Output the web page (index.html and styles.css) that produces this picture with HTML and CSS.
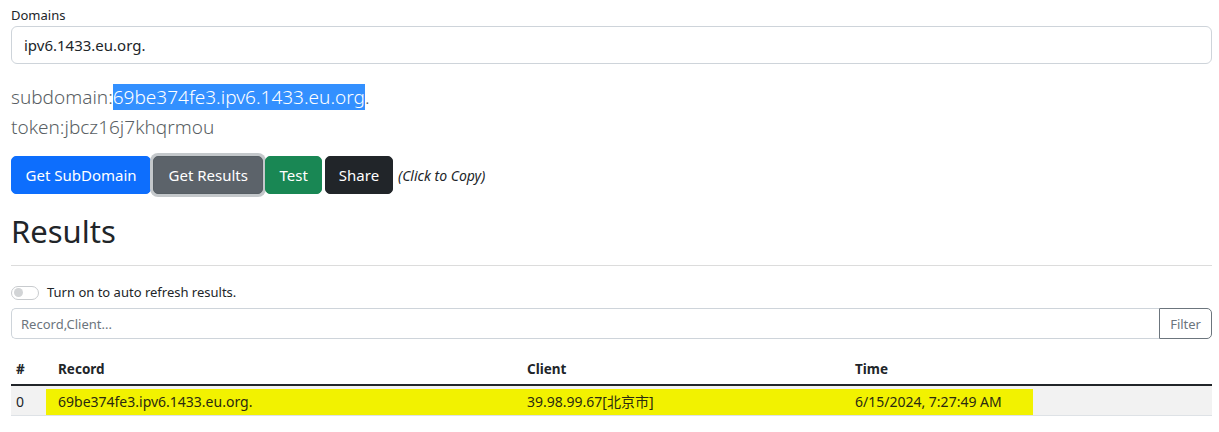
FILE: index.html
```html
<!DOCTYPE html>
<html lang="en">
<head>
<meta charset="utf-8">
<title>DNS Log</title>
<link rel="stylesheet" href="styles.css">
</head>
<body>
<div class="page">
  <label class="form-label" for="domain">Domains</label>
  <input class="form-control" id="domain" type="text" value="ipv6.1433.eu.org.">

  <div class="lead">
    <div>subdomain:<span class="sel">69be374fe3.ipv6.1433.eu.org</span>.</div>
    <div>token:jbcz16j7khqrmou</div>
  </div>

  <div class="btn-row">
    <button class="btn btn-primary">Get SubDomain</button>
    <button class="btn btn-secondary focus">Get Results</button>
    <button class="btn btn-success">Test</button>
    <button class="btn btn-dark">Share</button>
    <em class="hint">(Click to Copy)</em>
  </div>

  <h2 class="title">Results</h2>
  <hr class="rule">

  <div class="switch-row">
    <span class="switch"><span class="knob"></span></span>
    <span class="switch-label">Turn on to auto refresh results.</span>
  </div>

  <div class="input-group">
    <input class="filter-input" type="text" placeholder="Record,Client...">
    <button class="btn-filter">Filter</button>
  </div>

  <table class="table">
    <thead>
      <tr>
        <th class="c-idx">#</th>
        <th class="c-rec">Record</th>
        <th class="c-cli">Client</th>
        <th class="c-time">Time</th>
        <th class="c-rest"></th>
      </tr>
    </thead>
    <tbody>
      <tr class="striped">
        <td class="c-idx"><div class="cell">0</div></td>
        <td class="c-rec"><div class="cell hl">69be374fe3.ipv6.1433.eu.org.</div></td>
        <td class="c-cli"><div class="cell hl">39.98.99.67[北京市]</div></td>
        <td class="c-time"><div class="cell hl">6/15/2024, 7:27:49 AM</div></td>
        <td class="c-rest"><div class="cell"></div></td>
      </tr>
    </tbody>
  </table>
</div>
</body>
</html>
```

FILE: styles.css
```css
* { box-sizing: border-box; }

html, body {
  margin: 0;
  padding: 0;
  background: #fff;
}

body {
  font-family: "Noto Sans", "Noto Sans CJK SC", sans-serif;
  color: #212529;
  font-size: 16px;
  line-height: 1.5;
}

.page {
  padding: 5px 7px 0 11px;
}

.form-label {
  display: block;
  font-size: 13px;
  line-height: 21px;
  margin-bottom: 0;
}

.form-control {
  display: block;
  width: 100%;
  height: 38px;
  padding: 6px 12px;
  font-family: inherit;
  font-size: 15px;
  color: #212529;
  border: 1px solid #ced4da;
  border-radius: 6px;
  background: #fff;
  outline: none;
}

.lead {
  margin-top: 18px;
  font-size: 19px;
  font-weight: 300;
  line-height: 30px;
  color: #5a5f64;
}

.sel {
  background: #3390ff;
  color: #fff;
}

.btn-row {
  display: flex;
  align-items: center;
  gap: 2px;
  margin-top: 14px;
}

.btn {
  height: 38px;
  padding: 0 13px;
  font-family: inherit;
  font-size: 15px;
  line-height: 36px;
  color: #fff;
  border: 1px solid transparent;
  border-radius: 5px;
  cursor: pointer;
}

.btn-primary { background: #0d6efd; border-color: #0d6efd; padding: 0 13.5px; }
.btn-secondary { background: #5c636a; border-color: #565e64; }
.btn-success { background: #198754; border-color: #198754; padding: 0 13px; }
.btn-dark { background: #212529; border-color: #212529; margin-left: 1px; padding: 0 13px; }

.btn.focus {
  box-shadow: 0 0 0 3px #c4c8cb;
  padding: 0 14.5px;
}

.hint {
  margin-left: 3px;
  font-size: 14px;
  color: #212529;
}

.title {
  margin: 18px 0 0;
  font-size: 31px;
  font-weight: 400;
  line-height: 38px;
}

.rule {
  margin: 15px 0 0;
  border: 0;
  border-top: 1px solid #dcdcdc;
  height: 0;
}

.switch-row {
  display: flex;
  align-items: center;
  gap: 8px;
  margin-top: 16px;
  height: 21px;
}

.switch {
  display: flex;
  align-items: center;
  width: 28px;
  height: 14px;
  border: 1px solid #c8cbce;
  border-radius: 7px;
  padding: 0 2px;
}

.knob {
  width: 9px;
  height: 9px;
  border-radius: 50%;
  background: #d2d4d6;
}

.switch-label {
  font-size: 13px;
  line-height: 21px;
}

.input-group {
  display: flex;
  margin-top: 5px;
  height: 31px;
}

.filter-input {
  flex: 1;
  height: 31px;
  padding: 4px 9px;
  font-family: inherit;
  font-size: 13px;
  color: #212529;
  border: 1px solid #ced4da;
  border-right: 0;
  border-radius: 5px 0 0 5px;
  outline: none;
}

.filter-input::placeholder { color: #6c757d; }

.btn-filter {
  height: 31px;
  padding: 0 10px;
  font-family: inherit;
  font-size: 13px;
  color: #6c757d;
  background: #fff;
  border: 1px solid #6c757d;
  border-radius: 0 5px 5px 0;
}

.table {
  width: 100%;
  margin-top: 15px;
  border-collapse: collapse;
  font-size: 14px;
}

.table th {
  text-align: left;
  font-weight: 700;
  font-size: 13.5px;
  padding: 4px 5px;
  line-height: 22px;
  border-bottom: 2px solid #212529;
}

.table td {
  padding: 0;
  border-bottom: 1px solid #dee2e6;
}

.striped td { background: #f2f2f2; }

.cell {
  margin-top: 3px;
  padding: 0 12px;
  height: 26px;
  line-height: 26px;
  white-space: nowrap;
}

.c-idx .cell { padding: 0 5px; }

.hl { background: #f2f200; color: #2a2a10; }

.c-idx { width: 35px; }
.c-rec { width: 469px; }
.c-cli { width: 328px; }
.c-time { width: 190px; }

.table th.c-rec, .table th.c-cli, .table th.c-time { padding-left: 12px; }
```
